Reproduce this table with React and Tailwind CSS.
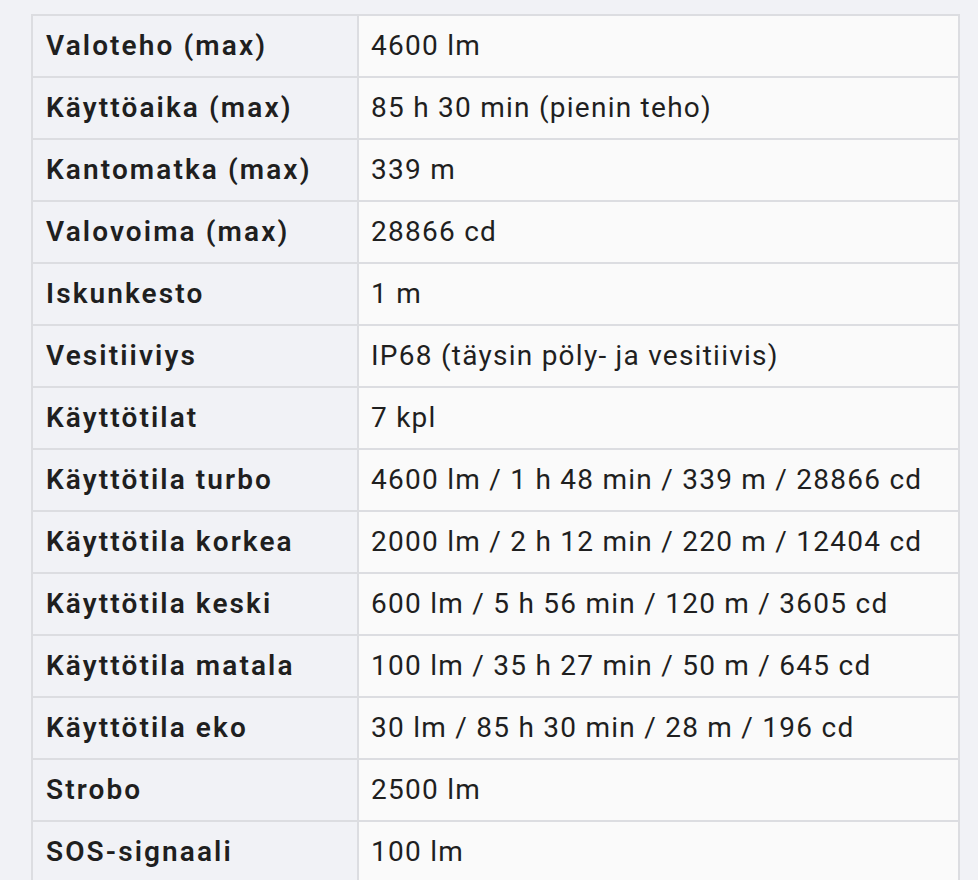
import React from "react";

const rows = [
  ["Valoteho (max)", "4600 lm"],
  ["Käyttöaika (max)", "85 h 30 min (pienin teho)"],
  ["Kantomatka (max)", "339 m"],
  ["Valovoima (max)", "28866 cd"],
  ["Iskunkesto", "1 m"],
  ["Vesitiiviys", "IP68 (täysin pöly- ja vesitiivis)"],
  ["Käyttötilat", "7 kpl"],
  ["Käyttötila turbo", "4600 lm / 1 h 48 min / 339 m / 28866 cd"],
  ["Käyttötila korkea", "2000 lm / 2 h 12 min / 220 m / 12404 cd"],
  ["Käyttötila keski", "600 lm / 5 h 56 min / 120 m / 3605 cd"],
  ["Käyttötila matala", "100 lm / 35 h 27 min / 50 m / 645 cd"],
  ["Käyttötila eko", "30 lm / 85 h 30 min / 28 m / 196 cd"],
  ["Strobo", "2500 lm"],
  ["SOS-signaali", "100 lm"],
];

export default function App() {
  return (
    <div
      className="min-h-screen bg-[#f1f2f6] pt-[14px] pl-[31px] pr-[18px] text-[#1f1f1f]"
      style={{ fontFamily: "Roboto, 'Liberation Sans', sans-serif" }}
    >
      <table className="w-[929px] border-collapse border-2 border-[#dcdde1] text-[28px] leading-[34px]">
        <tbody>
          {rows.map(([label, value]) => (
            <tr key={label} className="h-[62px]">
              <th className="w-[326px] border-2 border-[#dcdde1] bg-[#f1f2f6] pl-[13px] text-left font-semibold tracking-[2.1px]">
                {label}
              </th>
              <td className="border-2 border-[#dcdde1] bg-[#fafafa] pl-[12px] font-normal tracking-[1.25px]">
                {value}
              </td>
            </tr>
          ))}
        </tbody>
      </table>
    </div>
  );
}
